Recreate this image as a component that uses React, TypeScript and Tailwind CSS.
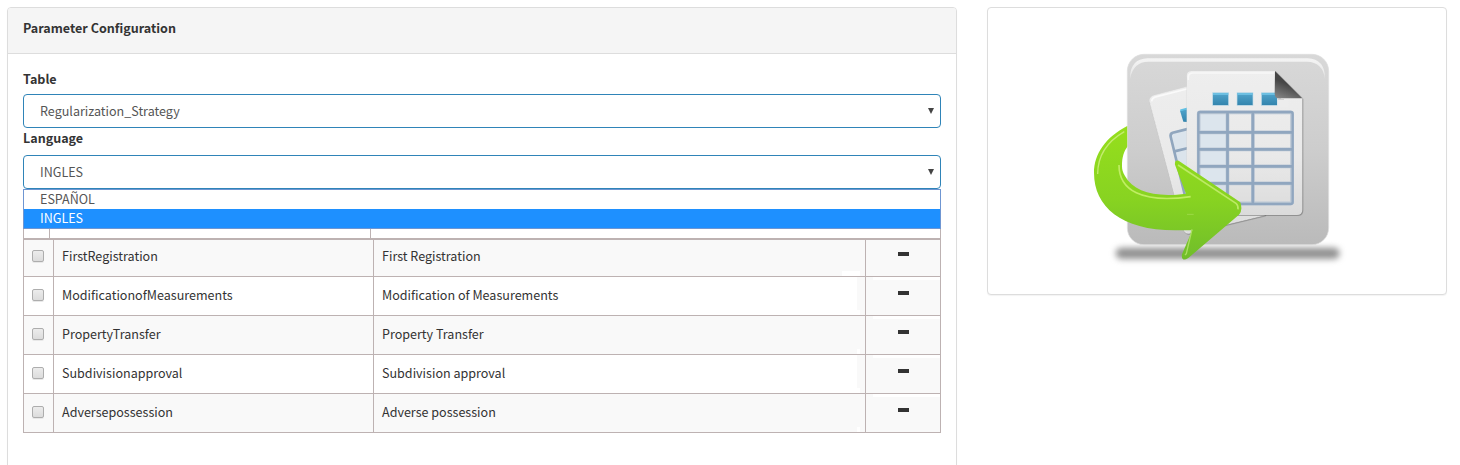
import React from "react";

const rows = [
  ["FirstRegistration", "First Registration"],
  ["ModificationofMeasurements", "Modification of Measurements"],
  ["PropertyTransfer", "Property Transfer"],
  ["Subdivisionapproval", "Subdivision approval"],
  ["Adversepossession", "Adverse possession"],
];

function Select({ value }: { value: string }) {
  return (
    <div className="flex h-[34px] items-center justify-between rounded-[4px] border border-[#2f84b8] bg-white pl-4 pr-[6px] text-[#555]">
      <span>{value}</span>
      <svg width="6" height="6" viewBox="0 0 6 6">
        <path d="M0 0H6L3 6Z" fill="#444" />
      </svg>
    </div>
  );
}

function Checkbox() {
  return (
    <span
      role="checkbox"
      aria-checked="false"
      className="block h-3 w-3 rounded-[2px] border border-[#adadad] bg-linear-to-b from-[#ececec] to-[#dcdcdc] shadow-[0_1px_0_#e8e8e8]"
    />
  );
}

function ParameterTable() {
  return (
    <div className="border-x border-b border-[#bdb2b2] text-[#333]">
      <div className="flex h-[11px] border-b-2 border-[#bdb2b2] bg-white">
        <div className="w-[26px] border-r border-[#bdb2b2]" />
        <div className="w-[321px] border-r border-[#bdb2b2]" />
      </div>
      {rows.map(([key, label], i) => (
        <div
          key={key}
          className={`flex ${i > 0 ? "h-[39px] border-t border-[#bdb2b2]" : "h-[36px]"} ${i % 2 ? "bg-white" : "bg-[#f9f9f9]"}`}
        >
          <div className="flex w-[30px] items-start justify-start border-r border-[#bdb2b2] pl-2">
            <div className={i > 0 ? "pt-[12px]" : "pt-[10px]"}>
              <Checkbox />
            </div>
          </div>
          <div className={`w-[320px] border-r border-[#bdb2b2] pl-2 leading-[20px] ${i > 0 ? "pt-[8px]" : "pt-[6px]"}`}>
            {key}
          </div>
          <div className="flex w-[492px] justify-between border-r border-[#bdb2b2] pl-2">
            <span className={`leading-[20px] ${i > 0 ? "pt-[8px]" : "pt-[6px]"}`}>{label}</span>
            {i === 0 ? (
              <span className="mr-[5px] h-[5px] w-[18px] self-end bg-white" />
            ) : (
              <span className="flex w-2 flex-col bg-[#f9f9f9]">
                <span className="mt-auto h-[5px] w-[3px] bg-white" />
              </span>
            )}
          </div>
          <div className="flex flex-1 flex-col items-center bg-[#f9f9f9]">
            {i > 0 && <span className="h-[3px] w-[67px] self-end bg-white" />}
            <span className={`h-1 w-[11px] bg-[#333] ${i > 0 ? "mt-[11px]" : "mt-[12px]"}`} />
          </div>
        </div>
      ))}
    </div>
  );
}

function TableImportIcon() {
  return (
    <svg width="270" height="235" viewBox="0 0 810 705" fill="none">
      <defs>
        <linearGradient id="tile" x1="0" y1="0" x2="0" y2="1">
          <stop stopColor="#d8d8d8" />
          <stop offset="0.5" stopColor="#cdcdcd" />
          <stop offset="1" stopColor="#bababa" />
        </linearGradient>
        <linearGradient id="sheet" x1="0" y1="0" x2="0" y2="1">
          <stop stopColor="#eeeeee" />
          <stop offset="0.6" stopColor="#e9e9e9" />
          <stop offset="1" stopColor="#dbdbdb" />
        </linearGradient>
        <linearGradient id="arrow" x1="0" y1="255" x2="0" y2="660" gradientUnits="userSpaceOnUse">
          <stop stopColor="#96df1c" />
          <stop offset="0.55" stopColor="#88d321" />
          <stop offset="1" stopColor="#70bd2b" />
        </linearGradient>
        <linearGradient id="chip" x1="0" y1="0" x2="0" y2="1">
          <stop stopColor="#52a5cc" />
          <stop offset="1" stopColor="#3384ad" />
        </linearGradient>
        <linearGradient id="fold" x1="590" y1="185" x2="611" y2="134" gradientUnits="userSpaceOnUse">
          <stop stopColor="#8c8c8c" />
          <stop offset="1" stopColor="#464646" />
        </linearGradient>
        <linearGradient id="shine" x1="0" y1="55" x2="0" y2="118" gradientUnits="userSpaceOnUse">
          <stop stopColor="#f4f4f4" />
          <stop offset="1" stopColor="#f4f4f4" stopOpacity="0.5" />
        </linearGradient>
        <filter id="soft" x="-10%" y="-150%" width="120%" height="400%" colorInterpolationFilters="sRGB">
          <feGaussianBlur stdDeviation="10" />
        </filter>
        <filter id="edge" x="-10%" y="-10%" width="120%" height="120%" colorInterpolationFilters="sRGB">
          <feDropShadow dx="2" dy="2" stdDeviation="2" floodColor="#555" floodOpacity="0.65" />
        </filter>
        <clipPath id="behind">
          <path d="M150 100H306V470H600V620H150Z" />
        </clipPath>
        <clipPath id="wrap">
          <path d="M0 200H127V350H600V700H0Z" />
        </clipPath>
      </defs>
      <rect x="92" y="623" width="672" height="34" rx="17" fill="#666" fillOpacity="0.72" filter="url(#soft)" />
      <rect x="127" y="43" width="604" height="571" rx="50" fill="url(#tile)" stroke="#dedede" strokeWidth="2" />
      <path d="M135 116Q135 56 188 55H668Q720 57 720 116Q713 66 666 65H190Q145 65 135 116Z" fill="url(#shine)" />
      <g clipPath="url(#behind)">
        <g filter="url(#edge)">
          <path
            d="M210 166L440 106L540 525L312 580Q300 581 297 569L194 184Q193 170 210 166Z"
            fill="url(#sheet)"
            stroke="#f2f2f2"
            strokeWidth="2"
          />
        </g>
        <path d="M200 184Q201 173 215 170L306 147" stroke="#fafafa" strokeWidth="5" />
        <path d="M285 212L308 206V246L295 245Z" fill="url(#chip)" />
        <path d="M286 211L308 205" stroke="#5fc0e4" strokeWidth="5" />
        <path d="M258 281L312 267V500L300 450Z" fill="#dbe4ec" />
        <path d="M312 266L263 278Q255 281 257 290L308 500M268 334L310 324" stroke="#90a6be" strokeWidth="8" />
      </g>
      <g filter="url(#edge)">
        <path
          d="M320 93H570L652 175V510Q652 525 636 525H320Q305 525 305 510V108Q305 93 320 93Z"
          fill="url(#sheet)"
        />
      </g>
      <path d="M310 120V110Q311 99 324 99H567" stroke="#f8f8f8" strokeWidth="5" />
      {[383, 456, 529].map((x) => (
        <g key={x}>
          <rect x={x} y="158" width="48" height="38" fill="url(#chip)" stroke="#c5dfea" strokeWidth="2" />
          <path d={`M${x + 1} 162h46`} stroke="#73c4e6" strokeWidth="5" />
        </g>
      ))}
      <path d="M577 155H610V200H577Z" fill="#ededed" />
      <path d="M570 93L652 175H590Q570 179 569 161Z" fill="url(#fold)" />
      <path d="M579 178H597" stroke="#cfcfcf" strokeWidth="3" />
      <path d="M341 217H427V490H341Z" fill="#dce5ed" />
      <path d="M341 435H427V490H341Z" fill="#d8dfe8" />
      <g stroke="#bcc8d5" strokeWidth="11">
        <rect x="341" y="217" width="280" height="273" rx="4" />
        <path d="M427.500 217V490M503.500 217V490M341 277H621M341 328H621M341 379H621M341 430H621" />
      </g>
      <g stroke="#90a6bf" strokeWidth="7">
        <rect x="340" y="216" width="283" height="276" rx="6" />
        <path d="M427.500 217V490M503.500 217V490M341 277H621M341 328H621M341 379H621M341 430H621" strokeWidth="8" />
      </g>
      <path
        clipPath="url(#wrap)"
        d="M128 257C62 291 27 341 27 398C27 500 108 570 270 571H322L291 643Q288 661 303 658L310 654L462 524Q474 512 466 487L281 362Q268 359 270 374L303 461C211 473 146 456 120 408C113 396 111 388 111 378C111 350 117 334 128 319Z"
        fill="url(#arrow)"
      />
      <path d="M118 275C68 304 38 347 38 402" stroke="#c4ec70" strokeWidth="4" />
      <path d="M102 375C102 450 169 491 317 470" stroke="#c0ed63" strokeWidth="5" />
      <path d="M279 375L453 490Q460 495 459 508" stroke="#bdea65" strokeWidth="5" />
      <path d="M321 568L304 641L300 645" stroke="#abdf62" strokeWidth="4" />
      <path d="M306 523H326" stroke="#a9e158" strokeWidth="2" />
    </svg>
  );
}

export default function App() {
  return (
    <main className="flex h-[465px] items-start gap-[30px] overflow-hidden bg-white pl-[7px] pt-[7px] font-['Noto_Sans_CJK_SC','Noto_Sans',sans-serif] text-[12.56px] leading-[20px]">
      <section className="h-[470px] w-[950px] shrink-0 rounded-[4px] border border-[#ddd] bg-white shadow-[0_1px_1px_rgba(0,0,0,0.05)]">
        <header className="h-[46px] rounded-t-[3px] border-b border-[#ddd] bg-[#f5f5f5] px-[15px] pt-[10px] font-bold text-[#333]">
          Parameter Configuration
        </header>
        <div className="px-[15px] pt-[15px]">
          <div className="h-[25px] font-bold text-[#333]">Table</div>
          <Select value="Regularization_Strategy" />
          <div className="h-[27px] font-bold text-[#333]">Language</div>
          <div>
            <Select value="INGLES" />
            <div className="h-10 border border-[#6f96d2] bg-white leading-[17px] text-[#555]">
              <div className="h-[19px] pl-4">ESPAÑOL</div>
              <div className="h-[19px] bg-[#1e90ff] pl-4 text-white">INGLES</div>
            </div>
          </div>
          <ParameterTable />
        </div>
      </section>
      <aside className="flex h-[288px] w-[460px] shrink-0 items-start rounded-[4px] border border-[#ddd] bg-white pl-[97px] pt-[32px] shadow-[0_1px_1px_rgba(0,0,0,0.05)]">
        <TableImportIcon />
      </aside>
    </main>
  );
}
